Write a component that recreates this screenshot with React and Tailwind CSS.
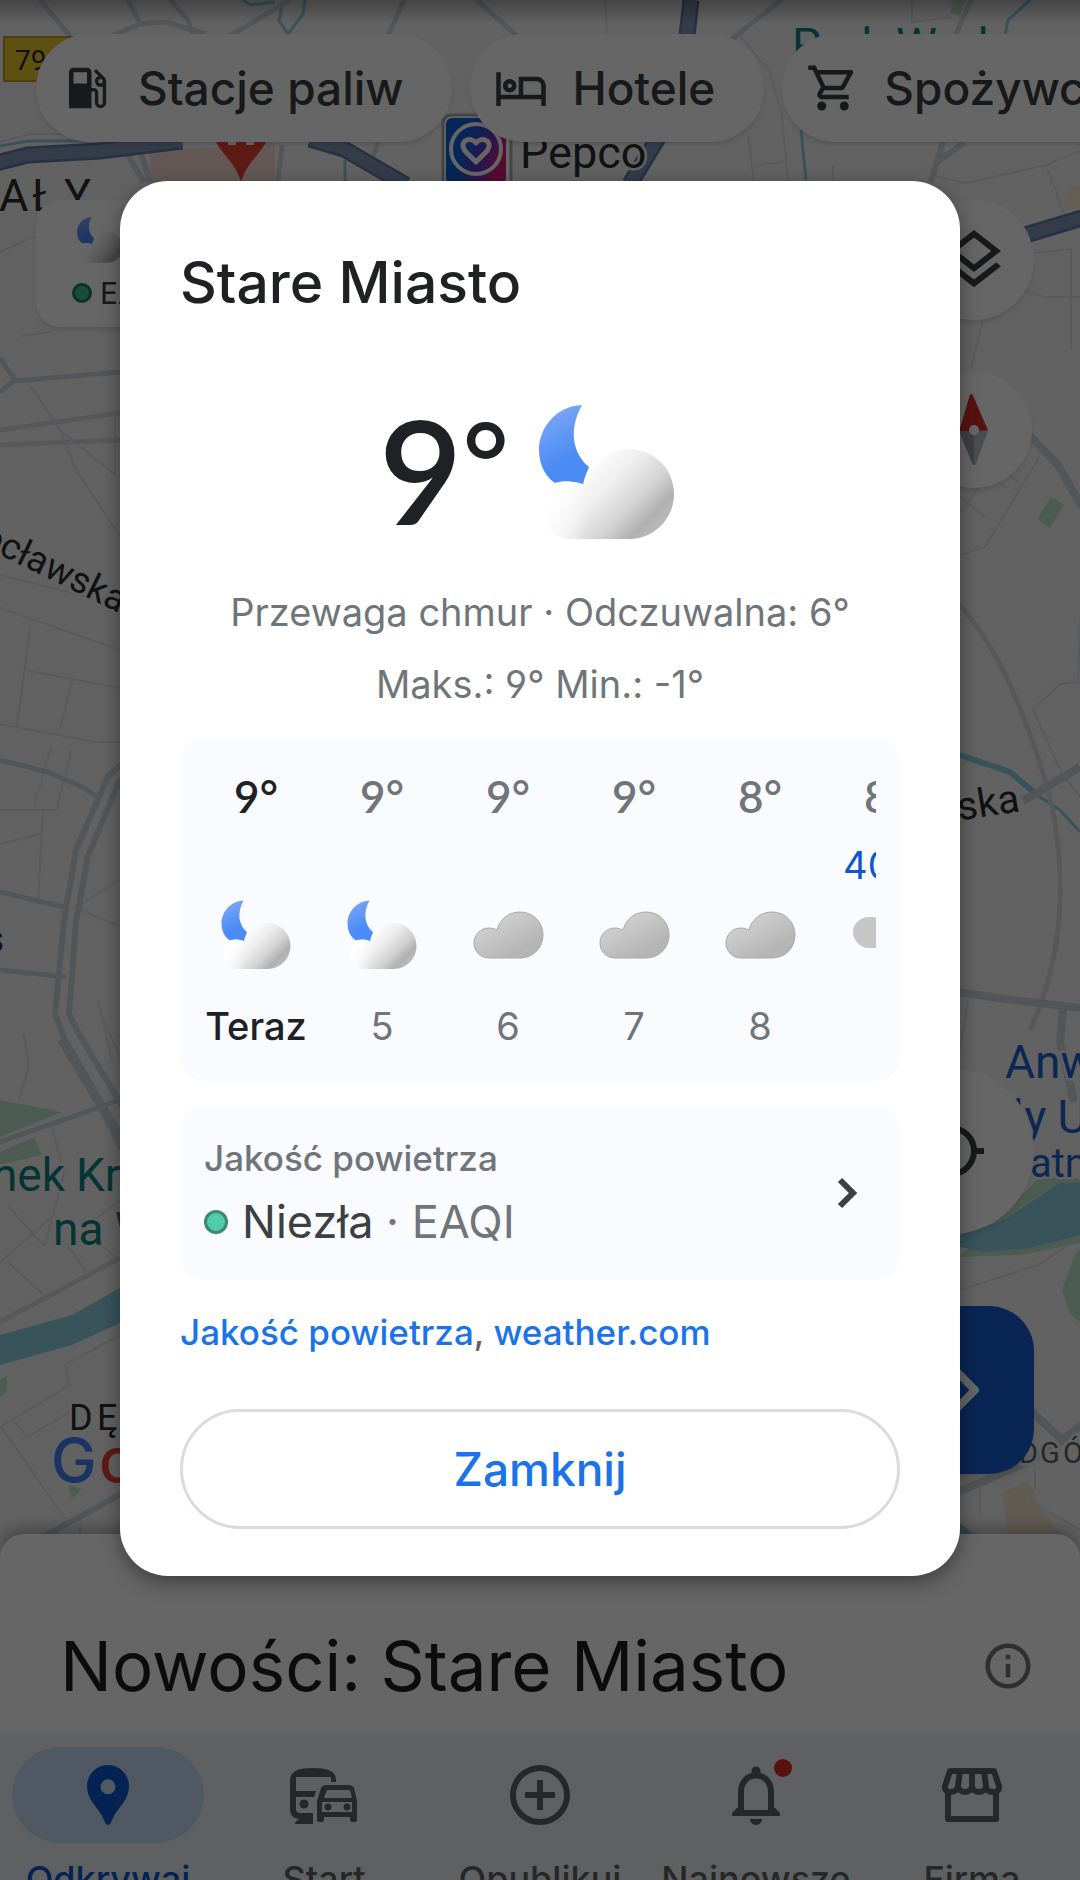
import { useId } from "react";
import {
  MdAddCircleOutline,
  MdInfoOutline,
  MdLocalGasStation,
  MdLocationPin,
  MdNotificationsNone,
  MdOutlineHotel,
  MdOutlineLayers,
  MdOutlineShoppingCart,
} from "react-icons/md";

const chips = [
  { label: "Stacje paliw", icon: MdLocalGasStation },
  { label: "Hotele", icon: MdOutlineHotel },
  { label: "Spożywcze", icon: MdOutlineShoppingCart },
];

const hours = [
  { temp: "9°", icon: "night", time: "Teraz", now: true },
  { temp: "9°", icon: "night", time: "5" },
  { temp: "9°", icon: "cloud", time: "6" },
  { temp: "9°", icon: "cloud", time: "7" },
  { temp: "8°", icon: "cloud", time: "8" },
  { temp: "8°", icon: "rain", time: "9", rain: "40%" },
];

const NightCloud = ({ className }) => {
  const id = useId();
  return (
    <svg viewBox="8 18 141 141" className={className} aria-hidden="true">
      <defs>
        <linearGradient id={`${id}moon`} x1="0.2" y1="0" x2="0.5" y2="0.9">
          <stop offset="0" stopColor="#7fa9f6" />
          <stop offset="0.8" stopColor="#4b8bf5" />
        </linearGradient>
        <linearGradient id={`${id}body`} gradientUnits="userSpaceOnUse" x1="45" y1="80" x2="118" y2="152">
          <stop offset="0.1" stopColor="#ffffff" />
          <stop offset="0.4" stopColor="#eeeeee" />
          <stop offset="0.7" stopColor="#d2d2d2" />
          <stop offset="0.9" stopColor="#b0b0b0" />
          <stop offset="1" stopColor="#b8b8b8" />
        </linearGradient>
        <linearGradient id={`${id}fade`} gradientUnits="userSpaceOnUse" x1="10" y1="0" x2="60" y2="0">
          <stop offset="0" stopColor="#ffffff" stopOpacity="0.9" />
          <stop offset="1" stopColor="#ffffff" stopOpacity="0" />
        </linearGradient>
      </defs>
      <path
        d="M54 21C29 22 11 43 11 66c0 15 7 27 16 33 9-3 18-2 28 2 1-7 4-13 6-18C45 70 40 46 54 21Z"
        fill={`url(#${id}moon)`}
      />
      <path
        d="M101 65c-21 0-36 13-44 36-8-4-18-4-28-2-8 6-14 16-14 30 2 14 13 26 28 26h58c25 0 45-20 45-45s-20-45-45-45Z"
        fill={`url(#${id}body)`}
      />
      <path d="M57 101c-8-4-18-4-28-2-8 6-14 16-14 30 2 14 13 26 28 26h17Z" fill={`url(#${id}fade)`} />
    </svg>
  );
};

const Cloud = ({ className }) => {
  const id = useId();
  return (
    <svg viewBox="0 0 72 72" className={className} aria-hidden="true">
      <defs>
        <linearGradient id={id} x1="0.1" y1="0.1" x2="0.7" y2="0.8">
          <stop offset="0" stopColor="#d6d6d6" />
          <stop offset="1" stopColor="#b5b5b5" />
        </linearGradient>
      </defs>
      <path
        d="M48 13c-11 0-20 7-23 18-2-1-5-2-8-2-9 0-15 7-15 15s6 15 15 15h31c13 0 23-10 23-23S61 13 48 13Z"
        fill={`url(#${id})`}
        stroke="#a8a8a8"
        strokeWidth="1"
      />
    </svg>
  );
};

const RainCloud = ({ className }) => (
  <svg viewBox="0 0 72 72" className={className} aria-hidden="true">
    <path
      d="M45 4c-9 0-16 6-18 15-2-1-5-1-8-1-9 0-16 7-16 15s7 16 16 16h26c12 0 22-10 22-23S57 4 45 4Z"
      fill="#c6c6c6"
    />
    <path d="M42 56l-4 9M56 56l-4 9" stroke="#4285f4" strokeWidth="4" strokeLinecap="round" />
  </svg>
);

const hourIcons = { night: NightCloud, cloud: Cloud, rain: RainCloud };

const TransitIcon = ({ className }) => (
  <svg viewBox="0 0 72 72" className={className} fill="currentColor" aria-hidden="true">
    <path d="M2 22C2 12 10 9 25 9s23 3 23 12v2h-5v-5H8v14h20l-2 6H8v12c0 3 2 4 5 4h12v11H7c0-2 1-3 4-5-6-1-9-4-9-9Z" />
    <circle cx="16" cy="45" r="4.500" />
    <path
      fillRule="evenodd"
      d="M38 26h23c2 0 4 1 5 3l3 13v19c0 1-1 2-2 2h-3c-1 0-2-1-2-2v-3H36v3c0 1-1 2-2 2h-3c-1 0-2-1-2-2V42l4-13c1-2 3-3 5-3Zm1 5-3 8h28l-2-8Zm-5 12v10h30V43Z"
    />
    <circle cx="40" cy="48" r="3.500" />
    <circle cx="59" cy="48" r="3.500" />
  </svg>
);

const StoreIcon = ({ className }) => (
  <svg
    viewBox="0 0 72 72"
    className={className}
    fill="none"
    stroke="currentColor"
    strokeWidth="6"
    strokeLinejoin="round"
    aria-hidden="true"
  >
    <path d="M14 12h44l5 15c1 4-2 6-6 6-5 0-7-3-7-6 0 3-3 6-7 6s-7-3-7-6c0 3-3 6-7 6s-7-3-7-6c0 3-3 6-7 6s-7-2-6-6Z" />
    <path d="M24 12l-2 15M36 12v15M48 12l2 15" />
    <path d="M12 32v28h48V32" />
  </svg>
);

const tabs = [
  { label: "Odkrywaj", icon: MdLocationPin, active: true },
  { label: "Start", icon: TransitIcon },
  { label: "Opublikuj", icon: MdAddCircleOutline },
  { label: "Najnowsze", icon: MdNotificationsNone, dot: true },
  { label: "Firma", icon: StoreIcon },
];

const CityMap = () => (
  <svg
    viewBox="0 0 1080 1880"
    preserveAspectRatio="xMidYMin slice"
    className="absolute inset-0 h-full w-full bg-[#f5f5f6]"
    aria-hidden="true"
  >
    <defs>
      <linearGradient id="pepco" x1="0" y1="0" x2="1" y2="0.4">
        <stop offset="0.4" stopColor="#0a63d8" />
        <stop offset="0.75" stopColor="#6a35c0" />
        <stop offset="1" stopColor="#d4207c" />
      </linearGradient>
      <linearGradient id="topShade" x1="0" y1="0" x2="0" y2="1">
        <stop offset="0" stopOpacity="0.3" />
        <stop offset="1" stopOpacity="0" />
      </linearGradient>
    </defs>

    {/* parks and water */}
    <g fill="#bfe5cd">
      <path d="M0 1100l62 12-62 25zM0 1152l34-15 8 18-42 10zM0 1380l7-5v16l-7 6zM68 1485l14 4-10 10z" />
      <path d="M1051 497l13 8-14 23-13-9zM1000 1218l38-40h42v65l-60 12-60 2zM1062 1290l13-36 5-4v72l-10-8zM953 0h13l-6 16-10-3z" />
    </g>
    <path d="M150 152l125-10v40H150z" fill="#fbdcd6" />
    <path d="M1002 1492l26-10 8 18 26 36h-54z" fill="#f3e6cf" />
    <path d="M1066 186h14v22l-16 2z" fill="#f9ecd0" />
    <path
      d="M0 1335l72-20 48-27v35l-48 22-72 20zM960 1235l46-16 54-36h20v52l-50 13-46 4-24-5zM960 1523l16 13h-16z"
      fill="#8ed0e4"
    />
    <g fill="none" stroke="#8ed0e4">
      <path d="M960 755l50 17 26 22" strokeWidth="6" />
      <path d="M1034 793l26 17 20 22M1030 0l-22 20-3 16M801 130l5 50M243 0l8 5 24-3M305 0l-2 14-15 20-9-13 3-16M0 146l28-5h80M345 160v22" strokeWidth="3" />
    </g>

    {/* railways */}
    <g fill="none" stroke="#dcdde0" strokeWidth="5">
      <path d="M960 605q30 35 50 80t32 85q20 60 18 130t-30 130M0 430l120-17M0 445l120-5M0 1322l120-64" />
    </g>

    {/* side streets */}
    <g fill="none" stroke="#dce1e7" strokeWidth="2">
      <path d="M0 142l30-8h80M0 252l35-16M22 336l30-4M30 385l30 45 16 40 44 66M60 430l55 45v-60M0 575l80 20 40 5M0 608l120 42M30 626l-5 40-8 60M72 680l-12 50M25 670l95 18M0 724l95 18h25M52 745l-18 60M72 750l-16 60H0M43 812l-5 90M0 844l43-11M100 1012l20 45M24 1035l5 30-10 35M120 880l-45 28 45 18M98 1000l14 60M52 1128l12 46-12 45-8 27M8 1206l36 40M0 1262l52-45M8 1262l36 33M68 1246l18 26M120 1200l-36 28 30 28M65 1365l55-30M65 1365l5 20-70 42M15 1422l12 15 45-26M0 1425l65 94M80 1535v-12" />
      <path d="M740 36l30 36 12 45 6 64M748 135l6 46M755 165l32-3M930 175l37 8 79-18 34-14M1046 165l18 48M1035 253l36-4v100M1020 290l25 7h35M983 320l-12 48M833 165v17M605 0l2 34M912 0v22l40-5M960 512l45-60M962 498l24 20M985 470l22 18M1010 476l12 9M960 555l25-8 54-90M1080 620l-2 62-18 2-27 26 30 66 17 20M960 1050l8-50M960 1290l78-25 42-28M1035 1470v18l-5 12 50 30M980 1485v30" />
    </g>

    {/* streets */}
    <g fill="none" stroke="#cfd7df" strokeWidth="5">
      <path d="M40 0l30 36M128 0l12 24 26-2 40 12M140 24l-28 12M170 0l18 20 5 15M290 0l-60 36M404 0l-16 36M477 0l40 36M781 0l-50 40M971 0l-16 36M282 145l-4 37M378 142l-6 18" />
      <path d="M0 358l15 22-15 12M15 381l105-9M0 760l48 12 36 16 12 8M0 892l68 16M0 970l66 7M0 1142l120-42" />
      <path d="M126 152l18 30M140 150l10 32M943 142l-12 40M965 142l-28 20" strokeWidth="6" />
      <path d="M122 764l-14 12-32 74-12 70-9 94 10 26 64 110M130 774l-12 10-30 72-12 66-7 92 10 20 60 100M60 1040l42 70 20 40M45 1536l76-42" strokeWidth="6" />
      <path d="M1028 434l30 31 24 42M1023 801l57-34M958 992l40 6 82 10M1063 1010l-3 32 14 60M1030 1410l32 30 20-16M1062 1440l-34 22-70 30" strokeWidth="8" />
    </g>
    <g fill="none" stroke="#637aa8" strokeWidth="17">
      <path d="M-4 163l32-8 72-4 82-10M310 139l34 10 62 36M691 0l-4 36M658 138l-28 46M1022 236l60-18" />
    </g>
    <g fill="none" stroke="#8397ba" strokeWidth="12">
      <path d="M-4 163l32-8 72-4 82-10M310 139l34 10 62 36M691 0l-4 36M658 138l-28 46M1022 236l60-18" />
    </g>

    {/* markers */}
    <rect x="4" y="37" width="90" height="44" fill="#eac92c" stroke="#c79e1e" strokeWidth="2" />
    <path d="M216 142h50c-6 12-20 22-25 40-5-18-19-28-25-40Z" fill="#ea4335" />
    <path d="M228 142h8v3h-8zM246 142h8v3h-8z" fill="#ffffff" />
    <rect x="443" y="115" width="68" height="74" rx="8" fill="#ffffff" stroke="#a9adb3" strokeWidth="3" />
    <rect x="446" y="118" width="60" height="66" rx="6" fill="url(#pepco)" />
    <circle cx="476" cy="149" r="25" fill="none" stroke="#ffffff" strokeWidth="4" />
    <path
      d="M476 162l-10-10c-9-10 4-17 10-9 6-8 19-1 10 9Z"
      fill="none"
      stroke="#ffffff"
      strokeWidth="5"
      strokeLinejoin="round"
    />

    <g fontFamily="Roboto, sans-serif" paintOrder="stroke" stroke="#f5f5f6" strokeWidth="5" fill="#2b2d30">
      <text x="15" y="70" fontSize="28" stroke="none">79</text>
      <text x="520" y="168" fontSize="45">Pepco</text>
      <text x="-1 32 64" y="211" fontSize="45">AŁY</text>
      <text transform="translate(119 613) rotate(26)" textAnchor="end" fontSize="37">ocławska</text>
      <text transform="translate(1021 811) rotate(-9)" textAnchor="end" fontSize="40">ńska</text>
      <text x="4" y="952" textAnchor="end" fontSize="38">s</text>
      <text x="69 97" y="1430" fontSize="36">DĘ</text>
      <text x="1019 1040 1063" y="1463" fontSize="29" fill="#5f6368">DGÓ</text>
      <g fill="#0b8583">
        <text x="792" y="61" fontSize="46">Park Wodny</text>
        <text x="65" y="1191" textAnchor="end" fontSize="46">Rynek</text>
        <text x="76" y="1191" fontSize="46">Kr</text>
        <text x="53" y="1245" fontSize="46">na W</text>
      </g>
      <g fill="#2163cf">
        <text x="1005" y="1078" fontSize="46">Anw</text>
        <text x="1012" y="1133" fontSize="46">ły U</text>
        <text x="1030" y="1177" fontSize="40">atn</text>
      </g>
    </g>
    <g fontFamily="Inter, sans-serif" fontSize="61" fontWeight="500" stroke="#f5f5f6" strokeWidth="4" paintOrder="stroke">
      <text x="51" y="1482" fill="#4285f4">G</text>
      <text x="99" y="1482" fill="#ea4335">o</text>
    </g>
    <rect width="1080" height="24" fill="url(#topShade)" />
  </svg>
);

const MapControls = () => (
  <div className="relative flex flex-1 justify-between pt-[54px] pr-[46px] pb-[60px] pl-9">
    <button
      type="button"
      className="flex h-[127px] w-[170px] flex-col items-start justify-between self-start rounded-3xl bg-white px-9 pt-4 pb-[18px] shadow-md"
    >
      <NightCloud className="ml-1 size-12" />
      <span className="flex items-center gap-2 text-[30px] leading-8 text-[#3c4043]">
        <span className="size-5 rounded-full border-[3px] border-[#1b7f5f] bg-[#3fbf93]" />
        EAQI
      </span>
    </button>
    <div className="flex flex-col items-end justify-between">
      <div className="flex flex-col items-center gap-[52px]">
        <button type="button" aria-label="Warstwy" className="flex size-[120px] items-center justify-center rounded-full bg-white shadow-md">
          <MdOutlineLayers className="size-[72px] text-[#3c4043]" />
        </button>
        <button type="button" aria-label="Kompas" className="flex size-[116px] items-center justify-center rounded-full bg-white shadow-md">
          <svg viewBox="0 0 34 74" className="h-[74px]" aria-hidden="true">
            <path d="M14 2q2-2 3 0l14 36H2Z" fill="#d93025" transform="rotate(-2 17 37)" />
            <path d="M2 38h15v34q-2 0-2-2Z" fill="#9aa0a6" />
            <path d="M17 38h14L19 71q-1 2-2 1Z" fill="#bdc1c6" />
            <circle cx="17" cy="37" r="5" fill="#ffffff" />
          </svg>
        </button>
      </div>
      <div className="flex flex-col items-end gap-[72px]">
        <button type="button" aria-label="Moja lokalizacja" className="flex size-[166px] items-center justify-center rounded-full bg-white shadow-md">
          <svg viewBox="0 0 66 66" className="size-[66px] text-[#3c4043]" fill="none" stroke="currentColor" strokeWidth="6" aria-hidden="true">
            <circle cx="33" cy="33" r="23" />
            <path d="M33 0v10M33 56v10M0 33h10M56 33h10" />
          </svg>
        </button>
        <button type="button" aria-label="Trasa" className="flex size-[168px] items-center justify-center rounded-[45px] bg-[#185ed2] shadow-lg">
          <svg viewBox="0 0 60 60" className="size-[60px]" fill="none" stroke="#ffffff" strokeWidth="8" strokeLinejoin="round" aria-hidden="true">
            <path d="M30 5l25 25-25 25L5 30Z" />
            <path d="M22 40V30h14" />
          </svg>
        </button>
      </div>
    </div>
  </div>
);

const HourColumn = ({ hour }) => {
  const Icon = hourIcons[hour.icon];
  return (
    <li className={`flex w-[104px] shrink-0 flex-col items-center ${hour.now ? "text-[#202124]" : "text-[#70757a]"}`}>
      <span className="h-12 font-[Lato,sans-serif] text-[44px] leading-11 font-semibold">{hour.temp}</span>
      <span className="mt-[23px] h-10 text-[38px] leading-10 text-[#0b57d0]">{hour.rain}</span>
      <Icon className="mt-[14px] size-[72px]" />
      <span className={`mt-[31px] text-[38px] leading-12 ${hour.now ? "font-medium" : ""}`}>{hour.time}</span>
    </li>
  );
};

const WeatherDialog = () => (
  <div
    role="dialog"
    aria-modal="true"
    aria-labelledby="weather-title"
    className="w-full rounded-[48px] bg-white px-[60px] pt-[68px] pb-[47px] shadow-[0_6px_20px_rgba(0,0,0,0.4)]"
  >
    <h1 id="weather-title" className="text-[57px] leading-[68px] font-medium text-[#202124]">
      Stare Miasto
    </h1>

    <div className="mt-[83px] flex h-36 items-center justify-center gap-[27px] pr-6">
      <span className="flex h-36 items-start font-[Lato,sans-serif] font-semibold text-[#202124]">
        <span className="text-[144px] leading-[140px]">9</span>
        <span className="text-[112px] leading-[120px]">°</span>
      </span>
      <NightCloud className="size-[141px]" />
    </div>

    <div className="mt-8 text-center text-[38px] leading-[72px] text-[#70757a]">
      <p>Przewaga chmur · Odczuwalna: 6°</p>
      <p>Maks.: 9° Min.: -1°</p>
    </div>

    <div className="mt-[18px] rounded-3xl bg-[#fafbff] px-6 pt-9 pb-[31px]">
      <ul className="flex gap-[22px] overflow-hidden">
        {hours.map((hour) => (
          <HourColumn key={hour.time} hour={hour} />
        ))}
      </ul>
    </div>

    <button type="button" className="mt-[25px] flex w-full items-center justify-between rounded-3xl bg-[#fafbff] px-6 py-7 text-left">
      <span className="flex flex-col gap-[10px]">
        <span className="text-[35px] leading-12 font-medium text-[#70757a]">Jakość powietrza</span>
        <span className="flex items-center gap-[14px] text-[45px] leading-[60px] text-[#70757a]">
          <span className="size-6 rounded-full border-[3px] border-[#3a8a70] bg-[#50cca8]" />
          <span>
            <span className="text-[#3c4043]">Niezła</span> · EAQI
          </span>
        </span>
      </span>
      <svg viewBox="0 0 60 60" className="size-[60px] text-[#3c4043]" fill="none" stroke="currentColor" strokeWidth="6" aria-hidden="true">
        <path d="M24 17l13 13-13 13" />
      </svg>
    </button>

    <p className="mt-7 text-[35px] leading-12 font-medium text-[#5f6368]">
      <a href="#air" className="text-[#1a73e8]">Jakość powietrza</a>,{" "}
      <a href="#weather" className="text-[#1a73e8]">weather.com</a>
    </p>

    <button type="button" className="mt-[53px] h-[120px] w-full rounded-full border-[3px] border-[#dadce0] text-[46px] font-medium text-[#1a73e8]">
      Zamknij
    </button>
  </div>
);

const App = () => (
  <div className="relative flex h-screen flex-col overflow-hidden font-[Inter,sans-serif] [font-feature-settings:'cv04']">
    <CityMap />

    <div className="relative flex gap-[18px] overflow-hidden pt-[34px] pb-1 pl-9">
      {chips.map(({ label, icon: Icon }) => (
        <button
          key={label}
          type="button"
          className="flex h-[108px] shrink-0 items-center gap-6 rounded-full bg-white pr-[49px] pl-6 text-[46px] font-medium text-[#3c4043] shadow-md"
        >
          <Icon className="size-[54px]" />
          {label}
        </button>
      ))}
    </div>

    <MapControls />

    <section className="relative flex h-[201px] shrink-0 items-center justify-between rounded-t-3xl bg-white pt-[62px] pr-[45px] pl-[60px] shadow-[0_-6px_16px_rgba(0,0,0,0.3)]">
      <h2 className="text-[69px] leading-[84px] text-[#1f1f1f]">Nowości: Stare Miasto</h2>
      <MdInfoOutline className="size-[54px] text-[#70757a]" />
    </section>

    <nav className="relative grid h-[145px] shrink-0 grid-cols-5 overflow-hidden bg-[#eef1f5]">
      {tabs.map(({ label, icon: Icon, active, dot }) => (
        <a
          key={label}
          href={`#${label}`}
          className={`flex flex-col items-center gap-3 pt-3 text-[36px] leading-12 font-medium ${active ? "text-[#0b57d0]" : "text-[#5f6368]"}`}
        >
          <span className={`relative flex h-24 w-48 shrink-0 items-center justify-center rounded-full ${active ? "bg-[#c9dcf8]" : ""}`}>
            <Icon className="size-[72px]" />
            {dot && <span className="absolute top-3 right-[60px] size-[18px] rounded-full bg-[#dc2b26]" />}
          </span>
          {label}
        </a>
      ))}
    </nav>

    <div className="absolute inset-0 flex items-start justify-center bg-black/60 px-[120px] pt-[181px]">
      <WeatherDialog />
    </div>
  </div>
);

export default App;
